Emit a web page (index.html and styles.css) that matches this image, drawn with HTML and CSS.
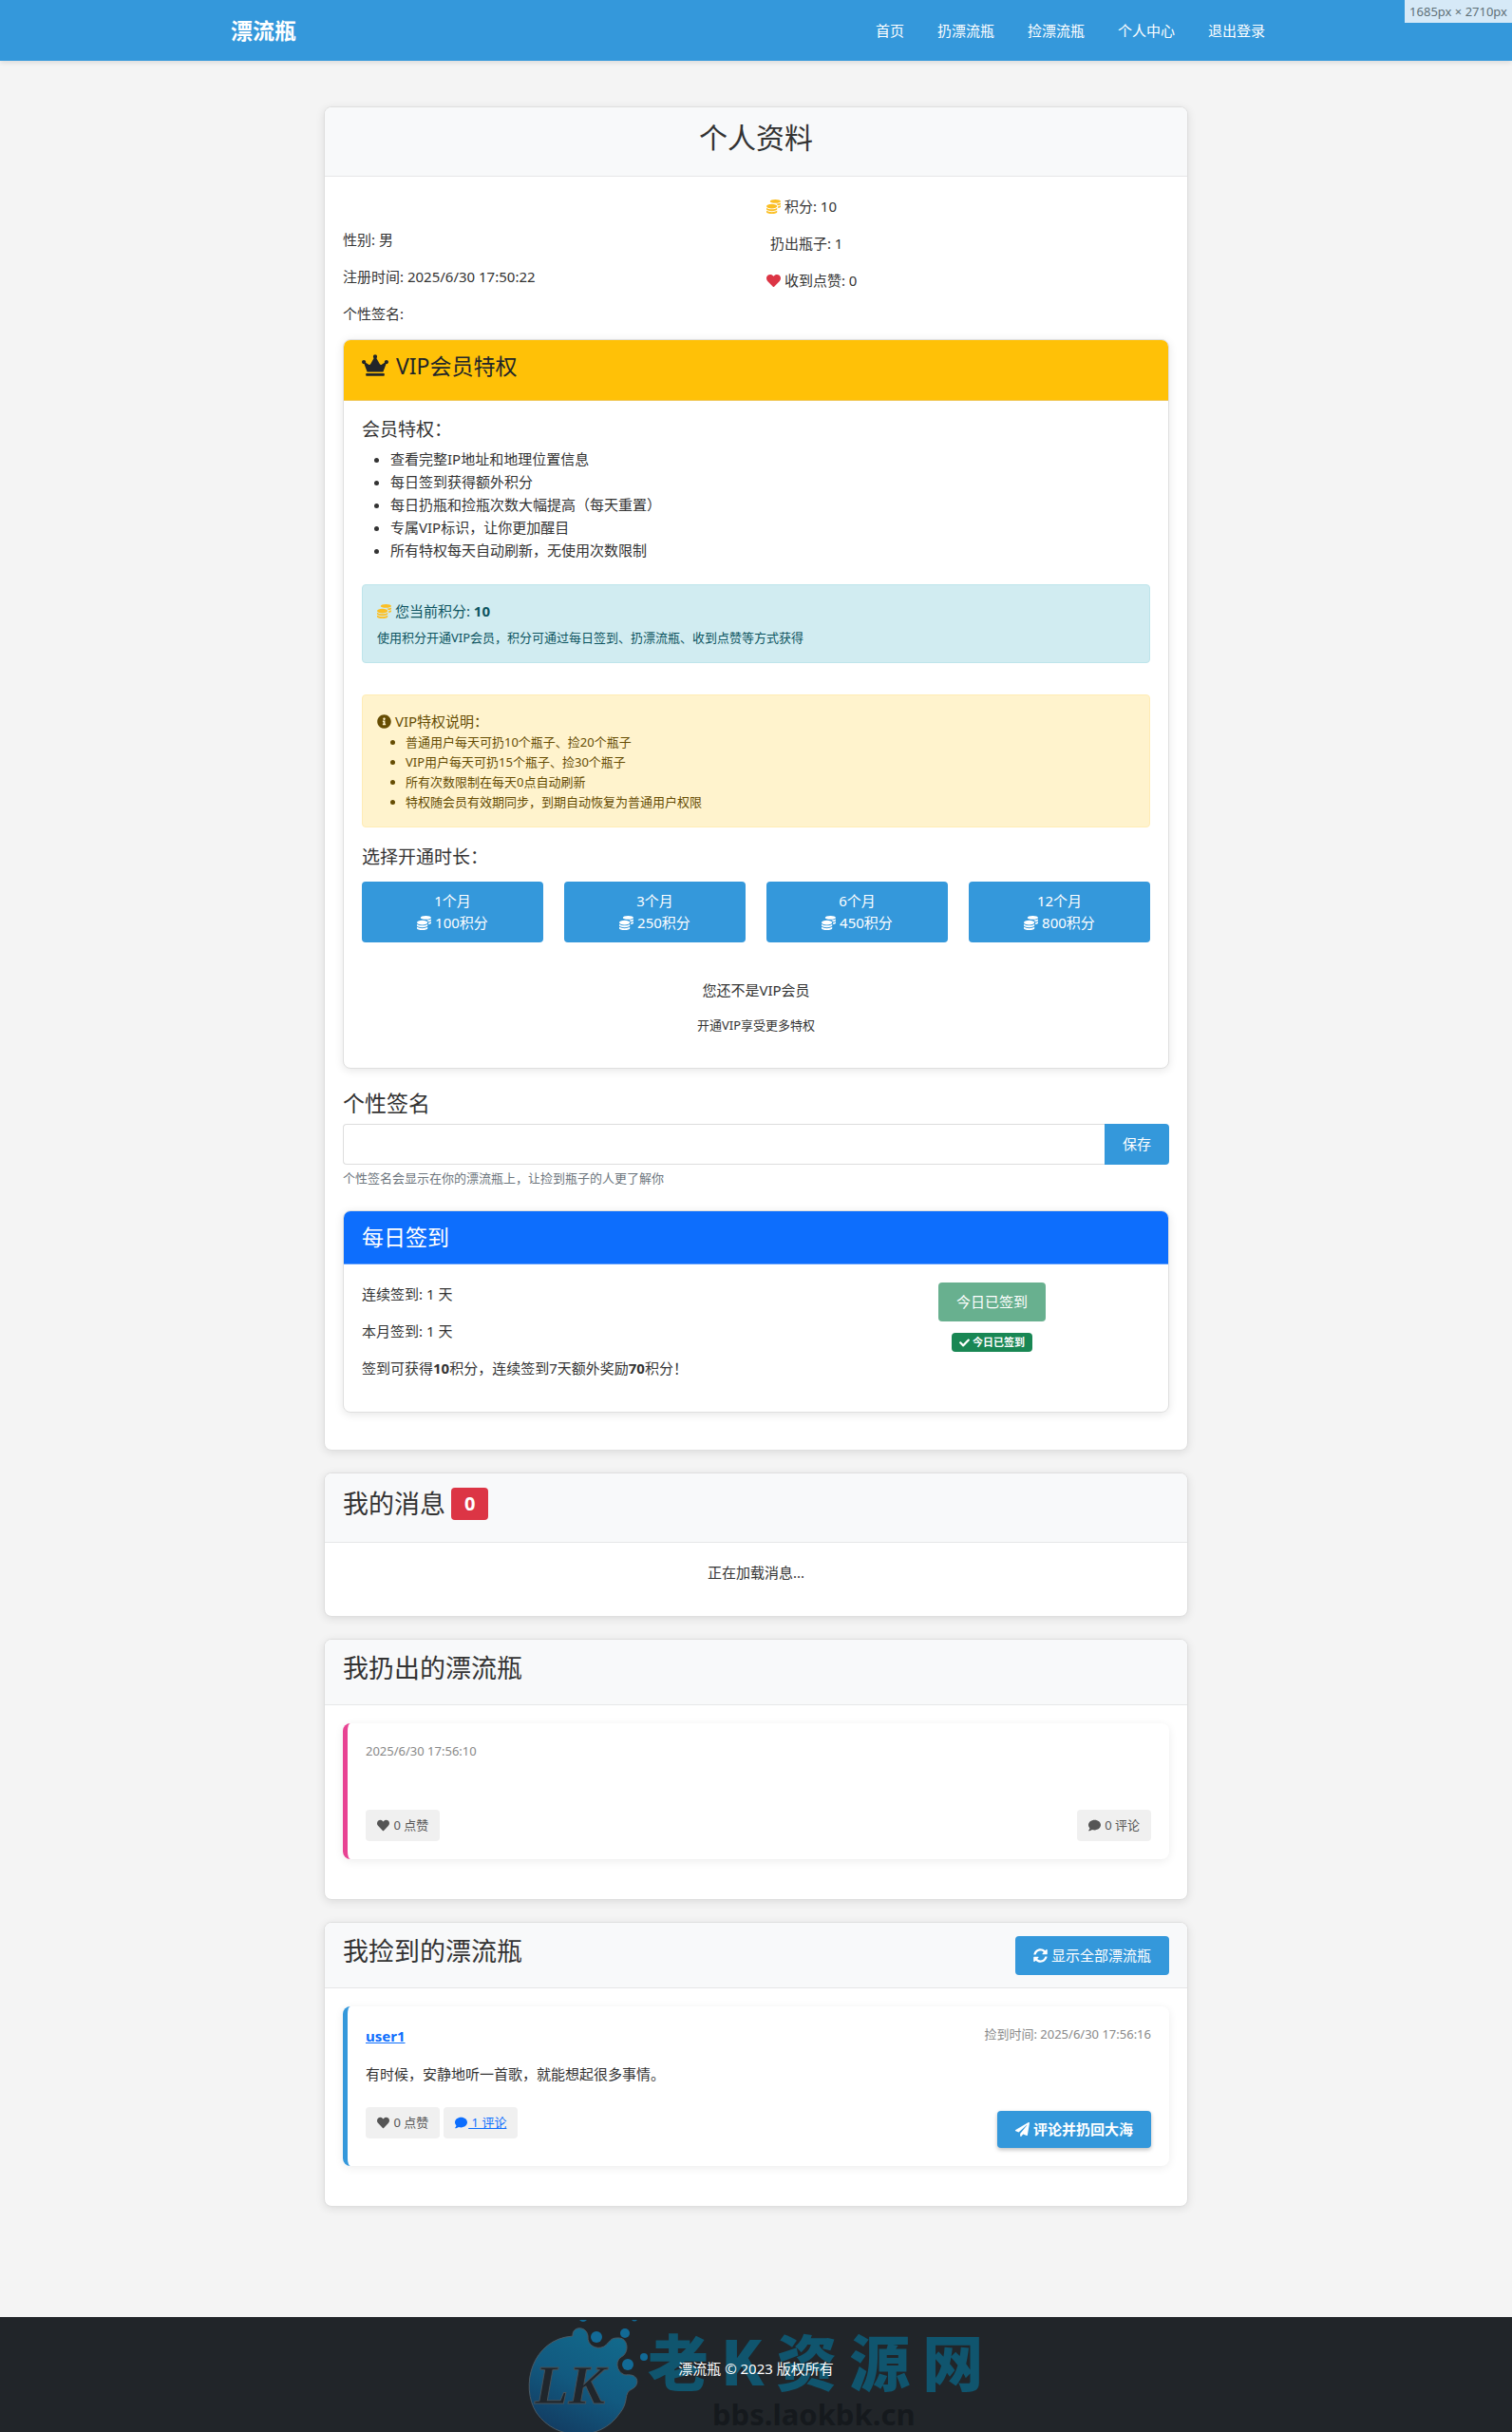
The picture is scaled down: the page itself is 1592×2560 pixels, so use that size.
FILE: index.html
```html
<!DOCTYPE html>
<html lang="zh-CN">
<head>
<meta charset="UTF-8">
<meta name="viewport" content="width=device-width, initial-scale=1.0">
<title>个人中心 - 漂流瓶</title>
<link rel="stylesheet" href="styles.css">
</head>
<body>
<svg class="sprite" aria-hidden="true">
  <symbol id="coins" viewBox="0 0 512 512"><path d="M0 405.3V448c0 35.3 86 64 192 64s192-28.7 192-64v-42.7C342.7 434.4 267.2 448 192 448S41.3 434.4 0 405.3zM320 128c106 0 192-28.7 192-64S426 0 320 0 128 28.7 128 64s86 64 192 64zM0 300.4V352c0 35.3 86 64 192 64s192-28.7 192-64v-51.6c-41.3 34-116.9 51.6-192 51.6S41.3 334.4 0 300.4zm416 11c57.3-11.1 96-31.7 96-55.4v-42.7c-23.2 16.4-57.3 27.6-96 34.5v63.6zM192 160C86 160 0 195.8 0 240s86 80 192 80 192-35.8 192-80-86-80-192-80zm219.3 56.3c60-10.8 100.7-32 100.7-56.3v-42.7c-35.5 25.1-96.5 38.6-160.7 41.8 29.5 14.3 51.2 33.5 60 57.2z"/></symbol>
  <symbol id="crown" viewBox="0 0 640 512"><path d="M528 448H112c-8.8 0-16 7.2-16 16v32c0 8.8 7.2 16 16 16h416c8.8 0 16-7.2 16-16v-32c0-8.8-7.2-16-16-16zm64-320c-26.5 0-48 21.5-48 48 0 7.1 1.6 13.7 4.4 19.8L476 239.2c-15.4 9.2-35.3 4-44.2-11.6L350.3 85C361 76.2 368 63 368 48c0-26.5-21.5-48-48-48s-48 21.5-48 48c0 15 7 28.2 17.7 37l-81.5 142.6c-8.9 15.6-28.9 20.8-44.2 11.6l-72.3-43.4c2.7-6 4.4-12.7 4.4-19.8 0-26.5-21.5-48-48-48S0 149.5 0 176s21.5 48 48 48c2.6 0 5.2-.4 7.7-.8L128 416h384l72.3-192.8c2.5.4 5.1.8 7.7.8 26.5 0 48-21.5 48-48s-21.5-48-48-48z"/></symbol>
  <symbol id="heart" viewBox="0 0 512 512"><path d="M462.3 62.6C407.5 15.9 326 24.3 275.7 76.2L256 96.5l-19.7-20.3C186.1 24.3 104.5 15.9 49.7 62.6c-62.8 53.6-66.1 149.8-9.9 207.9l193.5 199.8c12.5 12.9 32.8 12.9 45.3 0l193.5-199.8c56.3-58.1 53-154.3-9.8-207.9z"/></symbol>
  <symbol id="info" viewBox="0 0 512 512"><path d="M256 8C119.043 8 8 119.083 8 256c0 136.997 111.043 248 248 248s248-111.003 248-248C504 119.083 392.957 8 256 8zm0 110c23.196 0 42 18.804 42 42s-18.804 42-42 42-42-18.804-42-42 18.804-42 42-42zm56 254c0 6.627-5.373 12-12 12h-88c-6.627 0-12-5.373-12-12v-24c0-6.627 5.373-12 12-12h12v-64h-12c-6.627 0-12-5.373-12-12v-24c0-6.627 5.373-12 12-12h64c6.627 0 12 5.373 12 12v100h12c6.627 0 12 5.373 12 12v24z"/></symbol>
  <symbol id="check" viewBox="0 0 512 512"><path d="M173.898 439.404l-166.4-166.4c-9.997-9.997-9.997-26.206 0-36.204l36.203-36.204c9.997-9.998 26.207-9.998 36.204 0L192 312.69 432.095 72.596c9.997-9.997 26.207-9.997 36.204 0l36.203 36.204c9.997 9.997 9.997 26.206 0 36.204l-294.4 294.401c-9.998 9.997-26.207 9.997-36.204-.001z"/></symbol>
  <symbol id="comment" viewBox="0 0 512 512"><path d="M256 32C114.6 32 0 125.1 0 240c0 49.6 21.4 95 57 130.7C44.5 421.1 2.7 466 2.2 466.5c-2.2 2.3-2.8 5.7-1.5 8.7S4.8 480 8 480c66.3 0 116-31.8 140.6-51.4 32.7 12.3 69 19.4 107.4 19.4 141.4 0 256-93.1 256-208S397.4 32 256 32z"/></symbol>
  <symbol id="sync" viewBox="0 0 512 512"><path d="M370.72 133.28C339.458 104.008 298.888 87.962 255.848 88c-77.458.068-144.328 53.178-162.791 126.85-1.344 5.363-6.122 9.15-11.651 9.15H24.103c-7.498 0-13.194-6.807-11.807-14.176C33.933 94.924 134.813 8 256 8c66.448 0 126.791 26.136 171.315 68.685L463.03 40.97C478.149 25.851 504 36.559 504 57.941V192c0 13.255-10.745 24-24 24H345.941c-21.382 0-32.09-25.851-16.971-40.971l41.75-41.749zM32 296h134.059c21.382 0 32.09 25.851 16.971 40.971l-41.75 41.75c31.262 29.273 71.835 45.319 114.876 45.28 77.418-.07 144.315-53.144 162.787-126.849 1.344-5.363 6.122-9.15 11.651-9.15h57.304c7.498 0 13.194 6.807 11.807 14.176C478.067 417.076 377.187 504 256 504c-66.448 0-126.791-26.136-171.315-68.685L48.97 471.03C33.851 486.149 8 475.441 8 454.059V320c0-13.255 10.745-24 24-24z"/></symbol>
  <symbol id="plane" viewBox="0 0 512 512"><path d="M476 3.2L12.5 270.6c-18.1 10.4-15.8 35.6 2.2 43.2L121 358.4l287.3-253.2c5.5-4.9 13.3 2.6 8.6 8.3L176 407v80.5c0 23.6 28.5 32.9 42.5 15.8L282 426l124.6 52.2c14.2 6 30.4-2.9 33-18.2l72-432C515 7.8 493.3-6.8 476 3.2z"/></symbol>
</svg>

<header class="navbar">
  <div class="nav-container">
    <a class="logo" href="#">漂流瓶</a>
    <nav class="nav-links">
      <a href="#">首页</a>
      <a href="#">扔漂流瓶</a>
      <a href="#">捡漂流瓶</a>
      <a href="#">个人中心</a>
      <a href="#">退出登录</a>
    </nav>
  </div>
  <div class="size-tag">1685px × 2710px</div>
</header>

<main class="container">
  <section class="card">
    <div class="card-header text-center">
      <h2>个人资料</h2>
    </div>
    <div class="card-body">
      <div class="row half">
        <div class="col profile-info">
          <p>性别: 男</p>
          <p>注册时间: 2025/6/30 17:50:22</p>
          <p>个性签名:</p>
        </div>
        <div class="col">
          <p><svg class="icon gold"><use href="#coins"/></svg> 积分: 10</p>
          <p>&nbsp;扔出瓶子: 1</p>
          <p><svg class="icon red"><use href="#heart"/></svg> 收到点赞: 0</p>
        </div>
      </div>

      <div class="card vip-card">
        <div class="card-header vip-header">
          <h4><svg class="icon icon-crown"><use href="#crown"/></svg> VIP会员特权</h4>
        </div>
        <div class="card-body">
          <h5>会员特权：</h5>
          <ul class="vip-list">
            <li>查看完整IP地址和地理位置信息</li>
            <li>每日签到获得额外积分</li>
            <li>每日扔瓶和捡瓶次数大幅提高（每天重置）</li>
            <li>专属VIP标识，让你更加醒目</li>
            <li>所有特权每天自动刷新，无使用次数限制</li>
          </ul>
          <div class="alert alert-info">
            <p><svg class="icon gold"><use href="#coins"/></svg> 您当前积分: <strong>10</strong></p>
            <p class="small">使用积分开通VIP会员，积分可通过每日签到、扔漂流瓶、收到点赞等方式获得</p>
          </div>
          <div class="alert alert-warning">
            <div><svg class="icon"><use href="#info"/></svg> VIP特权说明：</div>
            <ul class="small">
              <li>普通用户每天可扔10个瓶子、捡20个瓶子</li>
              <li>VIP用户每天可扔15个瓶子、捡30个瓶子</li>
              <li>所有次数限制在每天0点自动刷新</li>
              <li>特权随会员有效期同步，到期自动恢复为普通用户权限</li>
            </ul>
          </div>
          <h5>选择开通时长：</h5>
          <div class="plans">
            <button class="btn">1个月<br><svg class="icon"><use href="#coins"/></svg> 100积分</button>
            <button class="btn">3个月<br><svg class="icon"><use href="#coins"/></svg> 250积分</button>
            <button class="btn">6个月<br><svg class="icon"><use href="#coins"/></svg> 450积分</button>
            <button class="btn">12个月<br><svg class="icon"><use href="#coins"/></svg> 800积分</button>
          </div>
          <div class="vip-status">
            <p>您还不是VIP会员</p>
            <p class="small">开通VIP享受更多特权</p>
          </div>
        </div>
      </div>

      <form class="signature-form">
        <label for="signature">个性签名</label>
        <div class="input-group">
          <input type="text" id="signature" maxlength="100">
          <button type="button" class="btn">保存</button>
        </div>
        <div class="small muted">个性签名会显示在你的漂流瓶上，让捡到瓶子的人更了解你</div>
      </form>

      <div class="card checkin-card">
        <div class="card-header checkin-header">
          <h4>每日签到</h4>
        </div>
        <div class="card-body">
          <div class="row checkin-row">
            <div class="col">
              <p>连续签到: 1 天</p>
              <p>本月签到: 1 天</p>
              <p>签到可获得<strong>10</strong>积分，连续签到7天额外奖励<strong>70</strong>积分！</p>
            </div>
            <div class="col checkin-action">
              <button class="btn btn-success" disabled>今日已签到</button>
              <span class="badge badge-success"><svg class="icon"><use href="#check"/></svg> 今日已签到</span>
            </div>
          </div>
        </div>
      </div>
    </div>
  </section>

  <section class="card">
    <div class="card-header">
      <h3 class="message-title">我的消息 <span class="badge badge-danger">0</span></h3>
    </div>
    <div class="card-body text-center">
      <p>正在加载消息...</p>
    </div>
  </section>

  <section class="card">
    <div class="card-header">
      <h3>我扔出的漂流瓶</h3>
    </div>
    <div class="card-body">
      <article class="bottle female">
        <div class="bottle-time">2025/6/30 17:56:10</div>
        <div class="bottle-content empty"></div>
        <div class="bottle-footer">
          <button class="chip"><svg class="icon"><use href="#heart"/></svg> 0 点赞</button>
          <button class="chip"><svg class="icon"><use href="#comment"/></svg> 0 评论</button>
        </div>
      </article>
    </div>
  </section>

  <section class="card">
    <div class="card-header picked-header">
      <h3>我捡到的漂流瓶</h3>
      <button class="btn"><svg class="icon"><use href="#sync"/></svg> 显示全部漂流瓶</button>
    </div>
    <div class="card-body">
      <article class="bottle male">
        <div class="bottle-top">
          <a class="user" href="#">user1</a>
          <span class="bottle-time">捡到时间: 2025/6/30 17:56:16</span>
        </div>
        <div class="bottle-content">有时候，安静地听一首歌，就能想起很多事情。</div>
        <div class="bottle-footer">
          <div class="chips">
            <button class="chip"><svg class="icon"><use href="#heart"/></svg> 0 点赞</button>
            <a class="chip" href="#"><svg class="icon"><use href="#comment"/></svg> 1 评论</a>
          </div>
          <button class="btn btn-throw"><svg class="icon"><use href="#plane"/></svg> 评论并扔回大海</button>
        </div>
      </article>
    </div>
  </section>
</main>

<footer class="footer">
  <div class="watermark">
    <svg class="wm-logo" viewBox="0 0 132 120">
      <defs>
        <linearGradient id="wmFill" x1="0.7" y1="0" x2="0.2" y2="1">
          <stop offset="0" stop-color="#126a8c"/>
          <stop offset="0.5" stop-color="#125a80"/>
          <stop offset="1" stop-color="#123a60"/>
        </linearGradient>
      </defs>
      <path fill="url(#wmFill)" stroke="#4a5963" d="M47 17C46 6 62 6 63 17C62 27 72 32 80 28C87 23 86 19 94 19C106 18 107 35 98 39C90 45 95 57 103 58C117 56 118 69 109 73C100 77 107 86 96 99C76 128 30 128 9 98C-9 70 4 20 47 17z"/>
      <g fill="#126a96">
        <circle cx="72" cy="18" r="6"/>
        <circle cx="102" cy="14" r="5"/>
        <circle cx="105" cy="47" r="6"/>
        <circle cx="122" cy="39" r="4"/>
        <path d="M54 0h8q-4 4-8 0zM109 0h6q-3 3-6 0z"/>
      </g>
      <text x="7" y="88" class="wm-letters">LK</text>
    </svg>
    <div class="wm-text">
      <div class="wm-name"><span>老</span><span>K</span><span>资</span><span>源</span><span>网</span></div>
      <div class="wm-url">bbs.laokbk.cn</div>
    </div>
  </div>
  <p>漂流瓶 © 2023 版权所有</p>
</footer>
</body>
</html>
```
FILE: styles.css
```css
* {
  box-sizing: border-box;
  margin: 0;
  padding: 0;
}
body {
  font-family: "Noto Sans", "Noto Sans CJK SC", sans-serif;
  font-size: 15px;
  line-height: 24px;
  color: #333;
  background-color: #f4f4f4;
  min-height: 100vh;
  display: flex;
  flex-direction: column;
}
a {
  color: #0d6efd;
}
p {
  margin-bottom: 15px;
}
h2, h3, h4, h5 {
  font-weight: 400;
  margin-bottom: 8px;
}
h2 {
  font-size: 30px;
  line-height: 36px;
}
h3 {
  font-size: 27px;
  line-height: 32px;
}
h4 {
  font-size: 23px;
  line-height: 27px;
}
h5 {
  font-size: 19px;
  line-height: 23px;
}
button, input {
  font: inherit;
}
.sprite {
  position: absolute;
  width: 0;
  height: 0;
}
.icon {
  width: 1em;
  height: 1em;
  fill: currentColor;
  vertical-align: -2px;
}
.icon-crown {
  width: 28px;
  margin-right: 2px;
}
.gold {
  color: #fbbf24;
}
.red {
  color: #dc3545;
}
.small {
  font-size: 13px;
  line-height: 21px;
}
.muted {
  color: #6c757d;
}
.text-center {
  text-align: center;
}

/* navbar */
.navbar {
  position: relative;
  background-color: #3498db;
  box-shadow: 0 2px 5px rgba(0, 0, 0, 0.1);
}
.nav-container {
  width: 100%;
  max-width: 1136px;
  height: 64px;
  margin: 0 auto;
  padding: 0 15px;
  display: flex;
  align-items: center;
  justify-content: space-between;
}
.navbar a {
  color: #fff;
  text-decoration: none;
}
.logo {
  font-size: 23px;
  font-weight: 700;
}
.nav-links {
  display: flex;
  gap: 35px;
  padding-right: 17px;
}
.size-tag {
  position: absolute;
  top: 0;
  right: 0;
  padding: 0 5px;
  font-size: 13px;
  background-color: #d6e9f7;
  color: #5f7078;
}

/* cards */
.container {
  width: 100%;
  max-width: 910px;
  margin: 48px auto 116px;
  display: flex;
  flex-direction: column;
  gap: 23px;
}
.card {
  background-color: #fff;
  border: 1px solid #dfdfdf;
  border-radius: 8px;
  box-shadow: 0 2px 10px rgba(0, 0, 0, 0.1);
  overflow: hidden;
}
.card-header {
  padding: 14px 19px;
  background-color: #f8f9fa;
  border-bottom: 1px solid #e6e7e8;
}
.card-body {
  padding: 19px;
}
.row {
  display: grid;
  margin: 0 -11px;
}
.half {
  grid-template-columns: 1fr 1fr;
}
.col {
  padding: 0 11px;
}
.profile-info {
  padding-top: 35px;
}

/* vip */
.vip-header {
  background-color: #ffc107;
  border-bottom-color: #f0c85a;
  color: #212529;
}
.vip-card h5 {
  margin-bottom: 7px;
}
.vip-list {
  padding-left: 30px;
  margin-bottom: 24px;
}
.alert {
  padding: 15px;
  border: 1px solid;
  border-radius: 4px;
}
.alert p {
  margin-bottom: 6px;
}
.alert p:last-child {
  margin-bottom: 0;
}
.alert-info {
  background-color: #d1ecf1;
  border-color: #bee5eb;
  color: #0c5460;
  margin-bottom: 33px;
}
.alert-warning {
  background-color: #fff3cd;
  border-color: #ffecb5;
  color: #664d03;
  margin-bottom: 20px;
}
.alert ul {
  padding-left: 30px;
}
.btn {
  padding: 9px 19px;
  line-height: 23px;
  color: #fff;
  background-color: #3498db;
  border: none;
  border-radius: 4px;
  cursor: pointer;
}
.btn:hover {
  background-color: #2980b9;
}
.plans {
  display: grid;
  grid-template-columns: repeat(4, 1fr);
  gap: 22px;
  padding-top: 7px;
}
.vip-status {
  padding-top: 38px;
  text-align: center;
}

/* signature */
.signature-form {
  padding: 23px 0;
}
.signature-form label {
  display: block;
  font-size: 23px;
  line-height: 27px;
  margin-bottom: 8px;
}
.input-group {
  display: flex;
  margin-bottom: 4px;
}
.input-group input {
  flex: 1;
  height: 43px;
  padding: 0 11px;
  border: 1px solid #ddd;
  border-right: none;
  border-radius: 4px 0 0 4px;
  outline: none;
}
.input-group .btn {
  border-radius: 0 4px 4px 0;
}

/* checkin */
.checkin-card {
  margin-bottom: 20px;
}
.checkin-header {
  background-color: #0d6efd;
  border-bottom-color: #5c9cfb;
  color: #fff;
}
.checkin-header h4 {
  margin-bottom: 0;
}
.checkin-row {
  grid-template-columns: 7fr 5fr;
}
.checkin-action {
  display: flex;
  flex-direction: column;
  align-items: center;
  gap: 12px;
}
.btn-success, .btn-success:hover {
  background-color: #198754;
  opacity: 0.65;
  cursor: default;
}
.badge {
  display: inline-block;
  font-weight: 700;
  color: #fff;
  border-radius: 4px;
}
.badge-success {
  padding: 4px 8px;
  font-size: 11px;
  line-height: 12px;
  background-color: #198754;
}
.badge-danger {
  padding: 7px 14px;
  font-size: 20px;
  line-height: 20px;
  background-color: #dc3545;
}
.message-title {
  display: flex;
  align-items: center;
  gap: 6px;
  line-height: 36px;
}

/* bottles */
.bottle {
  padding: 19px;
  border-left: 5px solid #3498db;
  border-radius: 8px;
  box-shadow: 0 2px 10px rgba(0, 0, 0, 0.08);
  margin-bottom: 23px;
}
.bottle.female {
  border-left-color: #e84393;
}
.bottle-top {
  display: flex;
  justify-content: space-between;
  margin-bottom: 16px;
}
.user {
  font-weight: 700;
}
.bottle-time {
  font-size: 13px;
  line-height: 21px;
  color: #888;
}
.bottle-content {
  margin-bottom: 23px;
}
.bottle-content.empty {
  padding-top: 28px;
}
.bottle-footer {
  display: flex;
  justify-content: space-between;
  align-items: flex-start;
}
.chips {
  display: flex;
  gap: 4px;
}
.chip {
  padding: 6px 12px;
  font-size: 13px;
  line-height: 21px;
  color: #555;
  background-color: #f0f0f0;
  border: none;
  border-radius: 4px;
  cursor: pointer;
}
.chip .icon {
  margin-right: 1px;
}
a.chip {
  color: #0d6efd;
}
.picked-header {
  display: flex;
  justify-content: space-between;
  align-items: center;
}
.picked-header .btn {
  margin: -4px 0;
}
.btn-throw {
  margin-top: 4px;
  padding: 8px 19px;
  font-weight: 700;
  box-shadow: 0 2px 4px rgba(0, 0, 0, 0.25);
}

/* footer */
.footer {
  position: relative;
  flex: 1;
  min-height: 122px;
  padding: 42px 0 56px;
  overflow: hidden;
  background-color: #212529;
  color: #fff;
  text-align: center;
}
.footer p {
  position: relative;
  margin: 0;
}
.watermark {
  position: absolute;
  top: 3px;
  left: 50%;
  width: 482px;
  margin-left: -240px;
  display: flex;
  text-align: left;
}
.wm-logo {
  flex: none;
  width: 132px;
  height: 120px;
  margin-right: -6px;
}
.wm-letters {
  font: italic 700 58px "Liberation Serif", serif;
  fill: #20262c;
  stroke: #46525a;
}
.wm-name {
  display: flex;
  gap: 13px;
  font-family: "Noto Sans CJK SC", sans-serif;
  font-size: 64px;
  line-height: 82px;
  font-weight: 900;
  color: #10556e;
}
.wm-url {
  padding-left: 68px;
  font-size: 31px;
  line-height: 34px;
  font-weight: 700;
  color: #15191d;
}
```
